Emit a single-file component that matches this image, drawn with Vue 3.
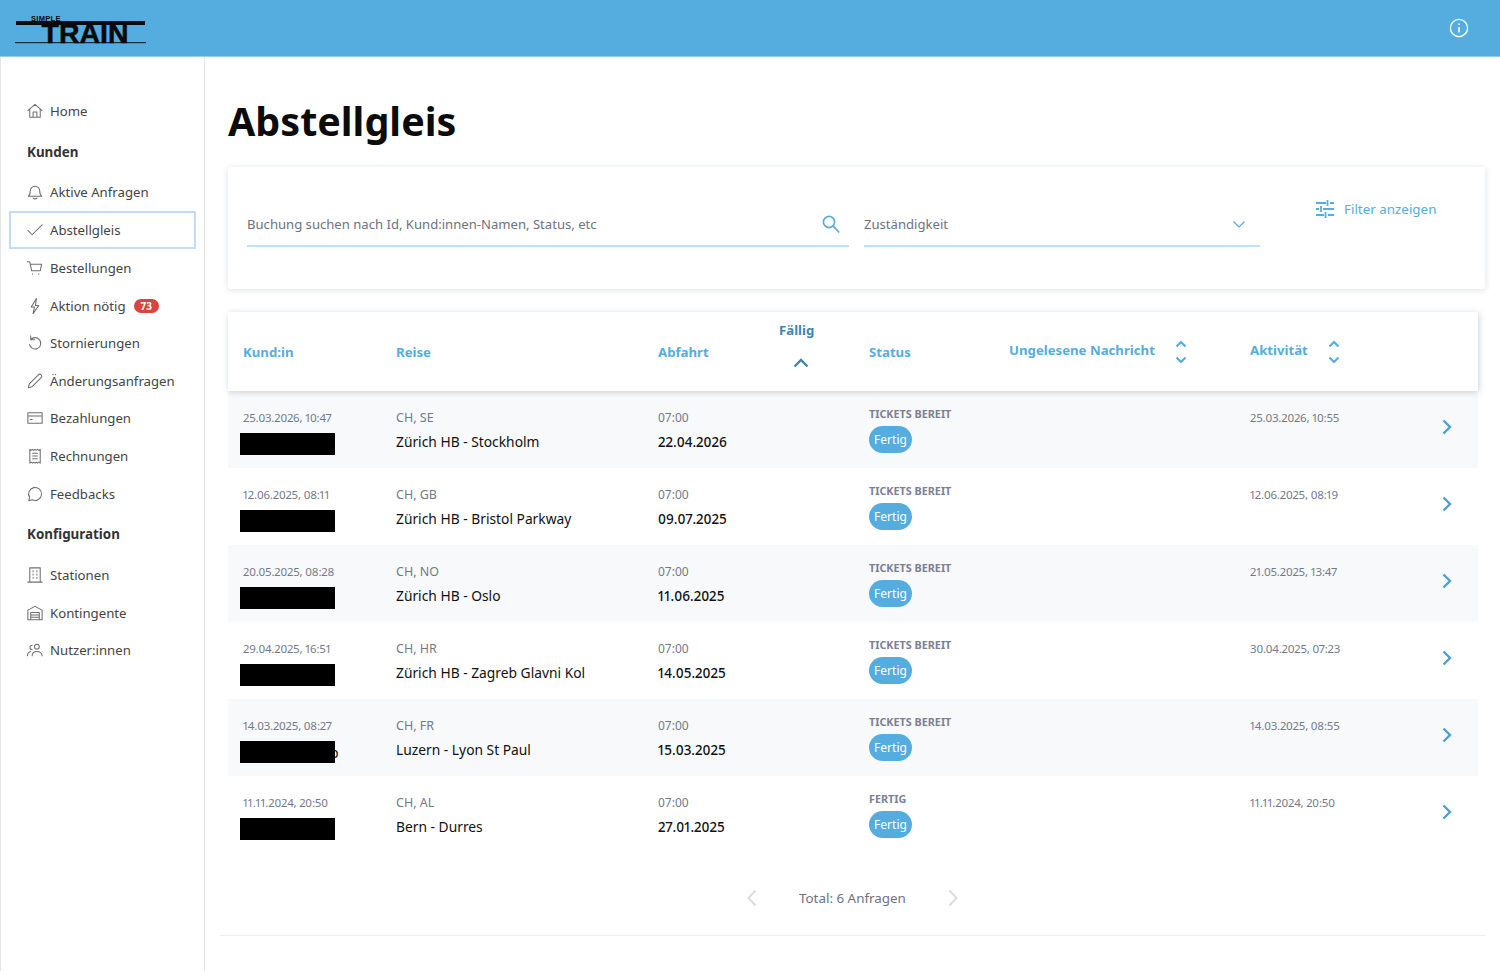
<template>
  <div class="page">
    <header class="topbar">
      <svg class="logo" width="134" height="36" viewBox="0 0 134 36">
        <text x="16" y="8.500" class="logo-small">SIMPLE</text>
        <rect x="1" y="9" width="129" height="4" fill="#0a0a0a" />
        <rect x="0" y="30" width="131" height="1.200" fill="#0a2c40" />
        <text x="26.500" y="31" class="logo-big">TRAIN</text>
      </svg>
      <svg class="info" width="20" height="20" viewBox="0 0 20 20" fill="none" stroke="#fff" stroke-width="1.300">
        <circle cx="10" cy="10" r="8.600" />
        <path d="M10 9v5.500M10 5.600v1.400" stroke-width="1.500" />
      </svg>
    </header>

    <div class="body">
      <aside class="sidebar">
        <template v-for="item in nav" :key="item.label">
          <div v-if="item.section" class="nav-section">{{ item.label }}</div>
          <a v-else class="nav-item" :class="{ active: item.active }">
            <svg width="18" height="18" viewBox="0 0 18 18" fill="none" stroke="#6f6f6f" stroke-width="1.100" stroke-linecap="round" stroke-linejoin="round">
              <path :d="item.icon" />
            </svg>
            <span>{{ item.label }}</span>
            <span v-if="item.badge" class="badge">{{ item.badge }}</span>
          </a>
        </template>
      </aside>

      <main class="main">
        <h1>Abstellgleis</h1>

        <section class="filters">
          <div class="field search">
            <span class="placeholder">Buchung suchen nach Id, Kund:innen-Namen, Status, etc</span>
            <svg width="20" height="20" viewBox="0 0 20 20" fill="none" stroke="#55addf" stroke-width="1.700" stroke-linecap="round">
              <circle cx="8" cy="8" r="5.600" /><path d="M12.200 12.200l5.600 5.800" />
            </svg>
          </div>
          <div class="field owner">
            <span class="placeholder">Zuständigkeit</span>
            <svg width="14" height="14" viewBox="0 0 14 14" fill="none" stroke="#55addf" stroke-width="1.200"><path d="M1.500 4.500l5.500 5.500 5.500-5.500" /></svg>
          </div>
          <div class="filter-toggle">
            <svg width="18" height="18" viewBox="0 0 18 18" fill="none" stroke="#55addf" stroke-width="1.800">
              <path d="M0 3h10M14 3h4M11.500 0v6M0 9h3M7 9h11M5 6v6M0 15h8M12 15h6M9.500 12v6" />
            </svg>
            <span>Filter anzeigen</span>
          </div>
        </section>

        <section class="table">
          <div class="table-head">
            <div class="th">Kund:in</div>
            <div class="th">Reise</div>
            <div class="th">Abfahrt</div>
            <div class="th sorted">
              <span>Fällig</span>
              <svg width="16" height="10" viewBox="0 0 16 10" fill="none" stroke="#3f86ad" stroke-width="2.400"><path d="M1.500 8.500L8 2l6.500 6.500" /></svg>
            </div>
            <div class="th">Status</div>
            <div class="th sortable">
              <span>Ungelesene Nachricht</span>
              <svg width="12" height="24" viewBox="0 0 12 24" fill="none" stroke="#55addf" stroke-width="2.200"><path d="M1.500 6.500L6 2l4.500 4.500M1.500 17.500L6 22l4.500-4.500" /></svg>
            </div>
            <div class="th sortable">
              <span>Aktivität</span>
              <svg width="12" height="24" viewBox="0 0 12 24" fill="none" stroke="#55addf" stroke-width="2.200"><path d="M1.500 6.500L6 2l4.500 4.500M1.500 17.500L6 22l4.500-4.500" /></svg>
            </div>
          </div>

          <div v-for="(row, i) in rows" :key="i" class="row" :class="{ shaded: i % 2 === 0 }">
            <div class="cell">
              <div class="small stamp">{{ row.created }}</div>
              <div class="redact-wrap"><div class="redact"></div><span v-if="row.peek" class="peek">p</span></div>
            </div>
            <div class="cell">
              <div class="small">{{ row.countries }}</div>
              <div class="strong">{{ row.route }}</div>
            </div>
            <div class="cell span2">
              <div class="small time">07:00</div>
              <div class="strong date">{{ row.due }}</div>
            </div>
            <div class="cell status">
              <div class="status-label">{{ row.status }}</div>
              <div class="pill">Fertig</div>
            </div>
            <div class="cell"></div>
            <div class="cell"><div class="small stamp">{{ row.activity }}</div></div>
            <div class="chevron">
              <svg width="12" height="18" viewBox="0 0 12 18" fill="none" stroke="#4e9fd0" stroke-width="2.400"><path d="M2.500 2.500L9 9l-6.500 6.500" /></svg>
            </div>
          </div>
        </section>

        <div class="pager">
          <svg width="12" height="18" viewBox="0 0 12 18" fill="none" stroke="#dcdcdc" stroke-width="2"><path d="M9.500 1.500L2.500 9l7 7.500" /></svg>
          <span>Total: 6 Anfragen</span>
          <svg width="12" height="18" viewBox="0 0 12 18" fill="none" stroke="#dcdcdc" stroke-width="2"><path d="M2.500 1.500L9.500 9l-7 7.500" /></svg>
        </div>
        <div class="rule"></div>
      </main>
    </div>
  </div>
</template>

<script setup>
const nav = [
  { label: 'Home', icon: 'M1.500 8.500L9 2l7.500 6.500M3.500 7v8.500h11V7M7 15.500V10h4v5.500' },
  { label: 'Kunden', section: true },
  { label: 'Aktive Anfragen', icon: 'M2 13.500c1.500-1 2-2.500 2-5.500a5 5 0 0 1 10 0c0 3 .5 4.500 2 5.500zM7 15.500c.8 1 3.200 1 4 0' },
  { label: 'Abstellgleis', active: true, icon: 'M1.500 9.500L6 14 16.500 3.500' },
  { label: 'Bestellungen', icon: 'M1 2.500h2.500L5.500 12h9l1.500-7H4M6.500 15v.5M13 15v.5' },
  { label: 'Aktion nötig', badge: 73, icon: 'M10.500 1L5 10h3.500L7 17l6-8.500H9.500z' },
  { label: 'Stornierungen', icon: 'M4.500 5.500a6 6 0 1 1-1.300 5M4.500 1.500v4h4' },
  { label: 'Änderungsanfragen', icon: 'M2 16l1-4L12.500 2.500c1-1 2-1 3 0s1 2 0 3L6 15z' },
  { label: 'Bezahlungen', icon: 'M1.500 3.500h15v11h-15zM1.500 7h15M4 10.500h2' },
  { label: 'Rechnungen', icon: 'M3.500 2l1.500 1 1.300-1 1.300 1L9 2l1.300 1 1.300-1 1.400 1 1.500-1v14.500l-1.500-1-1.400 1-1.300-1-1.300 1-1.300-1-1.300 1-1.300-1-1.500 1zM6.500 6h5M6.500 9h5M6.500 12h5' },
  { label: 'Feedbacks', icon: 'M2.500 16l.8-3.500A6.800 6.800 0 1 1 6 15z' },
  { label: 'Konfiguration', section: true },
  { label: 'Stationen', icon: 'M3.500 1.500h11v15h-11zM1.500 16.500h15M7 4.500v1M11 4.500v1M7 8v1M11 8v1M7 11.500v1M11 11.500v1' },
  { label: 'Kontingente', icon: 'M1.500 16V6L9 2l7.500 4v10zM4.500 8.500h9V16h-9zM4.500 11h9M4.500 13.500h9' },
  { label: 'Nutzer:innen', icon: 'M1 15c0-2.500 1.500-4 3.500-4.500M6 15c0-2.500 2-4.500 5-4.500s5.500 2 5.500 4.500M11 8a2.500 2.500 0 1 0 0-5 2.500 2.500 0 0 0 0 5zM6 8.500a2 2 0 0 1 0-4.500' }
]

const rows = [
  { created: '25.03.2026, 10:47', countries: 'CH, SE', route: 'Zürich HB - Stockholm', due: '22.04.2026', status: 'TICKETS BEREIT', activity: '25.03.2026, 10:55' },
  { created: '12.06.2025, 08:11', countries: 'CH, GB', route: 'Zürich HB - Bristol Parkway', due: '09.07.2025', status: 'TICKETS BEREIT', activity: '12.06.2025, 08:19' },
  { created: '20.05.2025, 08:28', countries: 'CH, NO', route: 'Zürich HB - Oslo', due: '11.06.2025', status: 'TICKETS BEREIT', activity: '21.05.2025, 13:47' },
  { created: '29.04.2025, 16:51', countries: 'CH, HR', route: 'Zürich HB - Zagreb Glavni Kol', due: '14.05.2025', status: 'TICKETS BEREIT', activity: '30.04.2025, 07:23' },
  { created: '14.03.2025, 08:27', countries: 'CH, FR', route: 'Luzern - Lyon St Paul', due: '15.03.2025', status: 'TICKETS BEREIT', activity: '14.03.2025, 08:55', peek: true },
  { created: '11.11.2024, 20:50', countries: 'CH, AL', route: 'Bern - Durres', due: '27.01.2025', status: 'FERTIG', activity: '11.11.2024, 20:50' }
]
</script>

<style>
html, body { margin: 0; background: #fff; }
</style>

<style scoped>
.page {
  height: 971px;
  overflow: hidden;
  display: flex;
  flex-direction: column;
  font-family: "Noto Sans", "Open Sans", sans-serif;
  color: #333;
}
.topbar {
  height: 57px;
  flex: none;
  background: #55addf;
  display: flex;
  align-items: center;
  justify-content: space-between;
  padding: 0 31px 0 15px;
  border-bottom: 1px solid #9ccbe6;
  box-sizing: border-box;
}
.logo { margin-top: 3px; overflow: visible; }
.logo-small { font: 700 7.500px "Liberation Sans", sans-serif; fill: #0a0a0a; letter-spacing: .3px; }
.logo-big { font: 700 28.500px "Liberation Sans", sans-serif; fill: #0a0a0a; stroke: #0a0a0a; stroke-width: .5px; }
.body { flex: 1; display: flex; min-height: 0; }

.sidebar {
  width: 205px;
  flex: none;
  box-sizing: border-box;
  border-left: 1px solid #e4e4e4;
  border-right: 1px solid #e4e4e4;
  padding: 35px 8px 0 8px;
}
.nav-item {
  height: 37.600px;
  display: flex;
  align-items: center;
  gap: 14px;
  padding-left: 17px;
  font-size: 13.200px;
  color: #444;
  box-sizing: border-box;
}
.nav-item svg { flex: none; margin-right: -8px; transform: scale(.95); }
.nav-item.active {
  border: 2px solid #c5dcf7;
  height: 38px;
  padding-left: 15px;
}
.nav-section {
  font-size: 13.400px;
  font-weight: 700;
  color: #333;
  padding-left: 18px;
  height: 44px;
  line-height: 44px;
}
.badge {
  margin-left: -6px;
  background: #d9453d;
  color: #fff;
  font-size: 10px;
  font-weight: 700;
  border-radius: 8px;
  padding: 0 7px;
  line-height: 14px;
}

.main { flex: 1; min-width: 0; padding: 0 15px 0 23px; }
h1 {
  margin: 34px 0 0;
  font-size: 39.500px;
  line-height: 60px;
  font-weight: 700;
  color: #0c0c0c;
}
.filters {
  margin-top: 16px;
  height: 122px;
  box-sizing: border-box;
  width: 1257px;
  background: #fff;
  border-radius: 3px;
  box-shadow: 0 1px 6px rgba(60, 80, 100, .18);
  padding: 0 0 0 19px;
  display: flex;
  align-items: flex-start;
  gap: 15px;
}
.field {
  margin-top: 40px;
  height: 40px;
  flex: none;
  border-bottom: 2px solid #c2e0fa;
  display: flex;
  align-items: center;
  justify-content: space-between;
  box-sizing: border-box;
  padding-bottom: 4px;
}
.search { width: 602px; padding-right: 8px; }
.owner { width: 396px; padding-right: 14px; }
.placeholder { font-size: 13.100px; color: #6f7280; }
.filter-toggle {
  margin: 33px 0 0 41px;
  display: flex;
  align-items: center;
  gap: 10px;
  color: #55addf;
  font-size: 13.400px;
  white-space: nowrap;
}

.table { margin-top: 23px; width: 1250px; }
.table-head, .row {
  display: grid;
  grid-template-columns: 153px 262px 121px 90px 140px 241px 191px 1fr;
  padding-left: 15px;
}
.table-head {
  height: 79px;
  box-sizing: border-box;
  background: #fff;
  align-items: center;
  box-shadow: 1px 1px 6px rgba(60, 80, 100, .25);
  position: relative;
}
.th { font-size: 13.200px; font-weight: 700; color: #55addf; white-space: nowrap; }
.th.sorted {
  color: #3f86ad;
  display: flex;
  flex-direction: column;
  align-items: flex-start;
  gap: 19px;
  margin-top: -14px;
}
.th.sorted svg { margin-left: 14px; }
.th.sortable { display: flex; align-items: center; gap: 20px; }
.th.sortable span { margin-top: -3px; }
.th.sortable svg { margin-top: 1px; }
.row {
  width: 1250px;
  height: 77px;
  box-sizing: border-box;
}
.row.shaded { background: #f7f9fa; }
.cell { display: flex; flex-direction: column; padding-top: 17px; min-width: 0; }
.span2 { grid-column: span 2; }
.small { font-size: 12.500px; line-height: 20px; color: #74798a; }
.stamp { font-size: 11.500px; letter-spacing: -.2px; font-variant-numeric: proportional-nums; }
.time { font-size: 12px; }
.strong { font-size: 13.800px; line-height: 20px; margin-top: 4px; color: #111; white-space: nowrap; }
.date { font-size: 13.500px; font-weight: 500; font-variant-numeric: proportional-nums; }
.redact-wrap { display: flex; align-items: center; margin: 5px 0 0 -3px; }
.redact { width: 95px; height: 22px; background: #000; position: relative; z-index: 1; flex: none; }
.peek { font-size: 14px; margin-left: -5px; color: #111; }
.status { padding-top: 14px; }
.status-label { font-size: 10.800px; line-height: 18px; font-weight: 700; color: #7b8095; white-space: nowrap; }
.pill {
  margin-top: 3px;
  width: 43px;
  height: 27px;
  border-radius: 14px;
  background: #55addf;
  color: #fff;
  font-size: 12px;
  display: flex;
  align-items: center;
  justify-content: center;
}
.chevron { padding-top: 27px; }
.chevron svg { display: block; }

.pager {
  margin-top: 35px;
  display: flex;
  align-items: center;
  gap: 41px;
  padding-left: 518px;
  font-size: 13.400px;
  color: #6f7280;
  height: 20px;
}
.rule { margin: 27px 0 0 -8px; width: 1266px; border-top: 1px solid #efefef; }
</style>
